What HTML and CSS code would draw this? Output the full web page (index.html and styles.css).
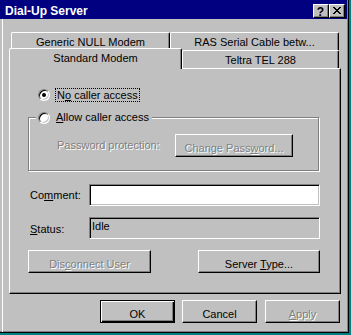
FILE: index.html
```
<!DOCTYPE html>
<html lang="en">
<head>
  <meta charset="UTF-8" />
  <title>Dial-Up Server</title>
  <link rel="stylesheet" href="styles.css">
</head>
<body>

  <div class="window">
    <!-- Title bar -->
    <div class="titlebar">
      <span class="title">Dial-Up Server</span>
      <div class="caption-btns">
        <span class="cap-btn help">?</span>
        <span class="cap-btn close">
          <svg width="8" height="7" viewBox="0 0 8 7" shape-rendering="crispEdges">
            <rect x="0" y="0" width="2" height="1"/><rect x="6" y="0" width="2" height="1"/>
            <rect x="1" y="1" width="2" height="1"/><rect x="5" y="1" width="2" height="1"/>
            <rect x="2" y="2" width="4" height="1"/>
            <rect x="3" y="3" width="2" height="1"/>
            <rect x="2" y="4" width="4" height="1"/>
            <rect x="1" y="5" width="2" height="1"/><rect x="5" y="5" width="2" height="1"/>
            <rect x="0" y="6" width="2" height="1"/><rect x="6" y="6" width="2" height="1"/>
          </svg>
        </span>
      </div>
    </div>

    <div class="client">
      <!-- Tabs -->
      <div class="tabrow back">
        <div class="tab short">Generic NULL Modem</div>
        <div class="tab long">RAS Serial Cable betw...</div>
      </div>
      <div class="tabrow front">
        <div class="tab selected">Standard Modem</div>
        <div class="tab narrow">Teltra TEL 288</div>
      </div>

      <!-- Sheet -->
      <div class="sheet">
        <div class="opt first">
          <span class="radio checked"></span>
          <span class="focus">N<u>o</u> caller access</span>
        </div>

        <fieldset class="group">
          <legend class="opt legend">
            <span class="radio"></span>
            <span><u>A</u>llow caller access</span>
          </legend>
          <div class="pw-row">
            <span class="pw-label disabled">Password protection:</span>
            <button class="btn pw-btn disabled">Change Pass<u>w</u>ord...</button>
          </div>
        </fieldset>

        <div class="field-row comment">
          <span class="label">Co<u>m</u>ment:</span>
          <div class="edit"></div>
        </div>
        <div class="field-row status">
          <span class="label"><u>S</u>tatus:</span>
          <div class="edit readonly">Idle</div>
        </div>

        <div class="sheet-btns">
          <button class="btn disconnect disabled">Dis<u>c</u>onnect User</button>
          <button class="btn server">Server <u>T</u>ype...</button>
        </div>
      </div>

      <!-- Dialog buttons -->
      <div class="actions">
        <button class="btn default">OK</button>
        <button class="btn">Cancel</button>
        <button class="btn apply disabled"><u>A</u>pply</button>
      </div>
    </div>
  </div>

</body>
</html>
```

FILE: styles.css
```
body {
  margin: 0; background: #008080; overflow: hidden;
  font-family: "Liberation Sans", Arial, sans-serif; font-size: 11px; line-height: 13px; color: #000;
}
.window {
  width: 349px; height: 333px; box-sizing: border-box;
  background: #c0c0c0;
  border-right: 1px solid #000; border-bottom: 1px solid #000;
  box-shadow: inset -1px -1px #808080;
  display: flex; flex-direction: column;
}

/* title bar */
.titlebar {
  width: 347px; height: 19px; box-sizing: border-box; flex: none;
  background: #000080; color: #fff;
  display: flex; justify-content: space-between; align-items: flex-start;
  padding: 0 2px 0 5px;
}
.title { font-size: 12px; font-weight: bold; padding-top: 5px; }
.caption-btns { display: flex; margin-top: 4px; }
.cap-btn {
  width: 16px; height: 14px; box-sizing: border-box;
  background: #c0c0c0; color: #000;
  border: 1px solid; border-color: #fff #000 #000 #fff;
  box-shadow: inset -1px -1px #808080;
  display: flex; align-items: center; justify-content: center;
}
.help { font-weight: bold; font-size: 12px; line-height: 12px; padding: 1px 1px 0 0; }
.close svg { fill: #000; margin-top: -1px; }

.client { flex: 1; margin-left: 2px; border-left: 1px solid #fff; }

/* tabs */
.tabrow { display: flex; align-items: flex-start; position: relative; }
.tabrow.back { margin-top: 13px; height: 18px; padding-left: 8px; }
.tabrow.front { height: 19px; margin-bottom: -1px; padding-left: 6px; z-index: 1; }
.tab {
  box-sizing: border-box; height: 18px; flex: none;
  background: #c0c0c0; text-align: center; padding-top: 3px;
  border: 1px solid; border-bottom: 0; border-color: #fff #000 #000 #fff;
  border-radius: 2px 2px 0 0;
  box-shadow: inset -1px 0 #808080;
}
.tab.short { width: 159px; }
.tab.long { width: 169px; }
.tab.selected { width: 173px; height: 21px; margin-top: -2px; }
.tab.narrow { width: 157px; }

/* property sheet */
.sheet {
  width: 332px; box-sizing: border-box; margin-left: 6px;
  border: 1px solid; border-color: #fff #000 #000 #fff;
  box-shadow: inset -1px -1px #808080;
  padding: 19px 20px 20px 18px;
}
.opt { display: flex; align-items: center; }
.opt.first { margin-left: 10px; gap: 5px; }
.focus { border: 1px dotted #000; line-height: 12px; padding: 0 1px; }
.radio {
  width: 12px; height: 12px; box-sizing: border-box; flex: none;
  border-radius: 50%; background: #fff;
  border: 1px solid; border-color: #808080 #fff #fff #808080;
  box-shadow: inset 1px 1px #000, inset -1px -1px #c0c0c0;
}
.radio.checked::after {
  content: ''; display: block; width: 4px; height: 4px; margin: 3px;
  border-radius: 50%; background: #000;
}

.group {
  width: 291px; box-sizing: border-box; margin: 9px 0 0; padding: 0; min-width: 0;
  border: 1px solid #808080;
  box-shadow: inset 1px 1px #fff, 1px 1px #fff;
}
.legend { margin-left: 7px; padding: 0 3px 0 2px; gap: 6px; background: #c0c0c0; }
.pw-row { display: flex; align-items: center; padding: 10px 0 13px 28px; }
.pw-label { width: 118px; }

.field-row { display: flex; }
.field-row.comment { margin-top: 13px; }
.field-row.status { margin-top: 11px; }
.label { width: 61px; padding: 5px 0 0 2px; box-sizing: border-box; }
.status .label { padding-top: 6px; }
.edit {
  flex: 1; height: 22px; box-sizing: border-box; background: #fff;
  border: 1px solid; border-color: #808080 #fff #fff #808080;
  box-shadow: inset 1px 1px #000, inset -1px -1px #c0c0c0;
}
.edit.readonly { background: #c0c0c0; padding: 2px 2px; }

.sheet-btns { display: flex; justify-content: space-between; margin-top: 11px; }

/* buttons */
.btn {
  height: 23px; width: 75px; box-sizing: border-box; margin: 0;
  font: inherit; color: #000; background: #c0c0c0;
  border: 1px solid; border-color: #fff #000 #000 #fff;
  box-shadow: inset -1px -1px #808080;
  padding: 5px 0 0; text-align: center; vertical-align: top;
  display: block;
}
.btn.default {
  border-color: #000;
  box-shadow: inset 1px 1px #fff, inset -1px -1px #000, inset -2px -2px #808080;
}
.disabled { color: #808080; text-shadow: 1px 1px 0 #fff; }
.pw-btn { width: 118px; }
.disconnect { width: 123px; }
.server { width: 122px; }

.actions { display: flex; gap: 7px; margin-top: 6px; padding-left: 97px; }
.apply { margin-left: 1px; }
```
